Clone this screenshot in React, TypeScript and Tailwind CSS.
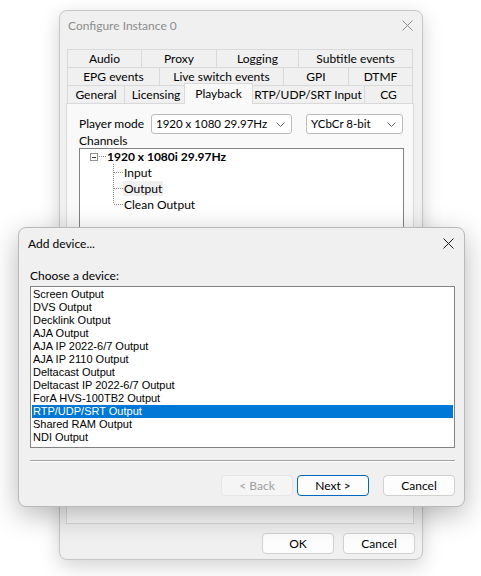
import React from 'react'

const ui = "font-['Lato','Noto_Sans',sans-serif]"
const list = "font-['Liberation_Sans',Arial,sans-serif]"

const tabRows: { label: string; w: number; selected?: boolean }[][] = [
  [
    { label: 'Audio', w: 74 },
    { label: 'Proxy', w: 75 },
    { label: 'Logging', w: 82 },
    { label: 'Subtitle events', w: 115 },
  ],
  [
    { label: 'EPG events', w: 92 },
    { label: 'Live switch events', w: 124 },
    { label: 'GPI', w: 65 },
    { label: 'DTMF', w: 65 },
  ],
  [
    { label: 'General', w: 57 },
    { label: 'Licensing', w: 63 },
    { label: 'Playback', w: 64, selected: true },
    { label: 'RTP/UDP/SRT Input', w: 113 },
    { label: 'CG', w: 49 },
  ],
]

const devices = [
  'Screen Output',
  'DVS Output',
  'Decklink Output',
  'AJA Output',
  'AJA IP 2022-6/7 Output',
  'AJA IP 2110 Output',
  'Deltacast Output',
  'Deltacast IP 2022-6/7 Output',
  'ForA HVS-100TB2 Output',
  'RTP/UDP/SRT Output',
  'Shared RAM Output',
  'NDI Output',
]

function CloseX({ color }: { color: string }) {
  return (
    <svg width="11" height="11" viewBox="0 0 11 11">
      <path d="M0.5 0.5 L10.5 10.5 M10.5 0.5 L0.5 10.5" stroke={color} strokeWidth="1" fill="none" />
    </svg>
  )
}

function Chevron() {
  return (
    <svg width="9" height="5" viewBox="0 0 9 5">
      <path d="M0.5 0.5 L4.5 4.5 L8.5 0.5" stroke="#606060" strokeWidth="1" fill="none" />
    </svg>
  )
}

function Combo({ value, w }: { value: string; w: string }) {
  return (
    <div className={`${w} h-[20px] bg-white border border-[#bcbcbc] rounded-[3px] flex items-center justify-between pl-[4px] pr-[6px] text-[11.5px] text-black`}>
      <span>{value}</span>
      <Chevron />
    </div>
  )
}

function Connector({ last }: { last?: boolean }) {
  return (
    <svg width="10" height="16" viewBox="0 0 10 16" className="shrink-0">
      <line x1="0.5" y1="0" x2="0.5" y2={last ? 8 : 16} stroke="#8a8a8a" strokeDasharray="1 1" />
      <line x1="1" y1="8.5" x2="10" y2="8.5" stroke="#8a8a8a" strokeDasharray="1 1" />
    </svg>
  )
}

function Button({ label, variant }: { label: string; variant?: 'disabled' | 'default' }) {
  const cls =
    variant === 'disabled'
      ? 'bg-[#f5f5f5] border-[#e5e5e5] text-[#9d9d9d]'
      : variant === 'default'
        ? 'bg-[#fdfdfd] border-[#0067c0] text-black'
        : 'bg-[#fdfdfd] border-[#d0d0d0] text-black'
  return (
    <div className={`w-[72px] h-[21px] border rounded-[4px] flex items-center justify-center text-[12px] ${cls}`}>
      {label}
    </div>
  )
}

export default function App() {
  return (
    <div className={`relative w-[481px] h-[576px] bg-white overflow-hidden ${ui}`}>
      {/* Configure Instance window */}
      <div className="absolute left-[59px] top-[10px] w-[364px] h-[550px] bg-[#f0f0f0] border border-[#c6c6c6] rounded-[8px] shadow-[0_6px_20px_rgba(0,0,0,0.18)] flex flex-col">
        <div className="h-[29px] shrink-0 flex items-center justify-between pl-[8px] pr-[9px]">
          <span className="text-[12px] text-[#8c8c8c]">Configure Instance 0</span>
          <CloseX color="#8c8c8c" />
        </div>
        <div className="mt-[9px] ml-[6px] w-[348px] flex flex-col">
          {tabRows.map((row, r) => (
            <div key={r} className="flex ml-[1px] h-[18px]">
              {row.map((t, i) => (
                <div
                  key={t.label}
                  style={{ width: t.w }}
                  className={`relative h-[18px] shrink-0 ${t.selected ? '' : 'border-t border-l border-[#d9d9d9] bg-[#f0f0f0]'} ${i === row.length - 1 ? 'border-r' : ''} flex items-center justify-center text-[12px] text-black`}
                >
                  {t.selected ? (
                    <div className="absolute -left-[3px] -right-[2px] -top-[2px] -bottom-[1px] z-10 bg-[#f9f9f9] border-t border-l border-r border-[#d9d9d9] flex items-start justify-center pt-[1px]">
                      {t.label}
                    </div>
                  ) : (
                    t.label
                  )}
                </div>
              ))}
            </div>
          ))}
          <div className="h-[421px] bg-[#f9f9f9] border border-[#d9d9d9] flex flex-col pt-[10px] pl-[12px]">
            <div className="flex items-center text-[12px] text-black">
              <span className="w-[72px]">Player mode</span>
              <Combo value="1920 x 1080 29.97Hz" w="w-[141px]" />
              <div className="w-[14px]" />
              <Combo value="YCbCr 8-bit" w="w-[97px]" />
            </div>
            <div className="text-[12px] text-black leading-[14px]">Channels</div>
            <div className="w-[325px] h-[330px] bg-white border border-[#828282] pl-[10px] text-[12px] text-black">
              <div className="h-[16px] flex items-center">
                <div className="w-[8px] h-[8px] border border-[#919191] flex items-center justify-center">
                  <div className="w-[4px] h-[1px] bg-[#333]" />
                </div>
                <svg width="8" height="2" viewBox="0 0 8 2" className="shrink-0">
                  <line x1="1" y1="0.5" x2="8" y2="0.5" stroke="#8a8a8a" strokeDasharray="1 1" />
                </svg>
                <span className="font-bold ml-[1px]">1920 x 1080i 29.97Hz</span>
              </div>
              <div className="pl-[23px] -mt-[1px] flex flex-col">
                {['Input', 'Output', 'Clean Output'].map((c, i, arr) => (
                  <div key={c} className="h-[16px] flex items-center">
                    <Connector last={i === arr.length - 1} />
                    <span className={`px-[1px] leading-[15px] ${c === 'Output' ? 'bg-[#efefef]' : ''}`}>{c}</span>
                  </div>
                ))}
              </div>
            </div>
          </div>
        </div>
        <div className="flex justify-end gap-[9px] pr-[7px] mt-[9px]">
          <Button label="OK" />
          <Button label="Cancel" />
        </div>
      </div>

      {/* Add device dialog */}
      <div className="absolute left-[18px] top-[227px] w-[447px] h-[280px] bg-[#f0f0f0] border border-[#b9b9b9] rounded-[8px] shadow-[0_8px_28px_rgba(0,0,0,0.28)] flex flex-col">
        <div className="h-[31px] shrink-0 flex items-center justify-between pl-[9px] pr-[10px]">
          <span className="text-[12px] text-black">Add device...</span>
          <CloseX color="#1a1a1a" />
        </div>
        <div className="pl-[11px] pr-[9px] flex flex-col">
          <div className="text-[12px] text-black leading-[14px] mt-[10px]">Choose a device:</div>
          <div className={`mt-[3px] h-[162px] bg-white border border-[#828282] p-[1px] text-[11px] ${list}`}>
            {devices.map(d => (
              <div
                key={d}
                className={`h-[13px] leading-[13px] px-[1px] ${d === 'RTP/UDP/SRT Output' ? 'bg-[#0078d7] text-white' : 'text-black'}`}
              >
                {d}
              </div>
            ))}
          </div>
          <div className="mt-[12px] h-[2px] border-t border-[#a0a0a0] border-b border-b-white" />
          <div className="mt-[13px] flex justify-end">
            <Button label="< Back" variant="disabled" />
            <div className="w-[4px]" />
            <Button label="Next >" variant="default" />
            <div className="w-[14px]" />
            <Button label="Cancel" />
          </div>
        </div>
      </div>
    </div>
  )
}
